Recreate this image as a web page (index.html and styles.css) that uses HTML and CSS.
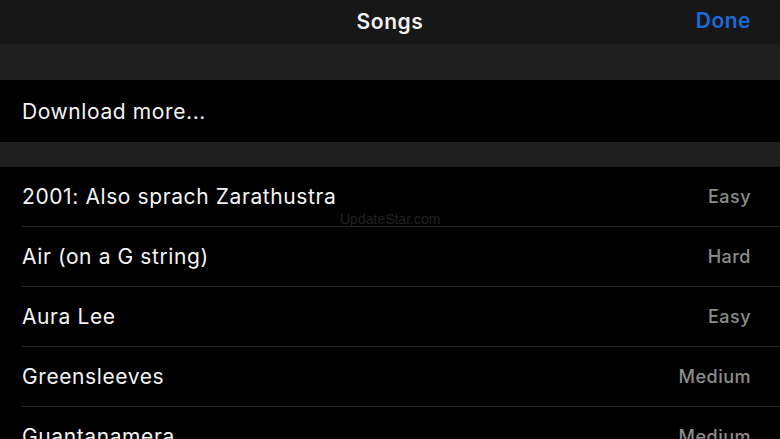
FILE: index.html
```html
<!DOCTYPE html>
<html>
<head>
<meta charset="utf-8">
<link rel="stylesheet" href="styles.css">
</head>
<body>
<div class="screen">
  <header class="nav">
    <div class="nav-title">Songs</div>
    <div class="nav-done">Done</div>
  </header>
  <div class="band band-top"></div>
  <div class="row single"><span class="title">Download more...</span></div>
  <div class="band band-mid"></div>
  <ul class="list">
    <li class="row"><span class="title">2001: Also sprach Zarathustra</span><span class="level">Easy</span></li>
    <li class="row"><span class="title">Air (on a G string)</span><span class="level">Hard</span></li>
    <li class="row"><span class="title">Aura Lee</span><span class="level">Easy</span></li>
    <li class="row"><span class="title">Greensleeves</span><span class="level">Medium</span></li>
    <li class="row"><span class="title">Guantanamera</span><span class="level">Medium</span></li>
  </ul>
  <div class="watermark">UpdateStar.com</div>
</div>
</body>
</html>
```

FILE: styles.css
```css
html, body {
  margin: 0;
  padding: 0;
  background: #000;
}
.screen {
  position: relative;
  width: 780px;
  height: 439px;
  overflow: hidden;
  background: #000;
  font-family: Inter, "Liberation Sans", sans-serif;
  color: #fff;
}
.nav {
  height: 44px;
  background: #171717;
  display: flex;
  align-items: center;
  justify-content: center;
  position: relative;
}
.nav-title {
  font-size: 21px;
  font-weight: 600;
  color: #f2f2f2;
  margin-top: -2px;
  letter-spacing: 0.6px;
}
.nav-done {
  position: absolute;
  right: 29px;
  top: 8px;
  font-size: 21px;
  font-weight: 600;
  color: #1c6ad9;
  letter-spacing: 0.5px;
}
.band {
  background: #1e1e1e;
}
.band-top { height: 36px; }
.band-mid { height: 25px; }
.list {
  list-style: none;
  margin: 0;
  padding: 0;
}
.row {
  height: 60px;
  display: flex;
  align-items: center;
  justify-content: space-between;
  padding: 0 29px 0 22px;
  box-sizing: border-box;
}
.single { height: 62px; }
.list .row {
  padding-left: 0;
  margin-left: 22px;
  border-bottom: 1px solid #262626;
}
.title {
  font-size: 21px;
  font-weight: 400;
  color: #f4f4f4;
  letter-spacing: 0.6px;
}
.level {
  font-size: 18px;
  font-weight: 500;
  color: #8c8c8c;
  letter-spacing: 0.5px;
}
.watermark {
  position: absolute;
  left: 340px;
  top: 211px;
  font-size: 14px;
  color: #222;
  font-family: "Liberation Sans", sans-serif;
}
```
